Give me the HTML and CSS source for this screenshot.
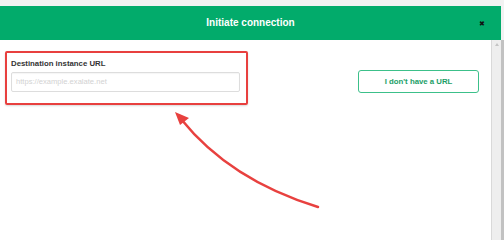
FILE: index.html
```html
<!DOCTYPE html>
<html>
<head>
<meta charset="utf-8">
<link rel="stylesheet" href="styles.css">
</head>
<body>
<div class="page">
  <div class="dialog">
    <div class="header">
      <span class="title">Initiate connection</span>
      <span class="close">&#x2716;</span>
    </div>
    <div class="body">
      <div class="content">
        <div class="highlight">
          <label class="label">Destination instance URL</label>
          <div class="input">https://example.exalate.net</div>
        </div>
        <div class="btn">I don't have a URL</div>
      </div>
      <div class="scrollbar"><span class="up"></span></div>
    </div>
  </div>
  <div class="edge"></div>
</div>
<svg class="arrow" width="504" height="237" viewBox="0 0 504 237">
  <path d="M318 207 Q230 180 181 119" fill="none" stroke="#e8413f" stroke-width="2.5" stroke-linecap="round"/>
  <polygon points="175,112 189,118 180,125" fill="#e8413f"/>
</svg>
</body>
</html>
```
FILE: styles.css
```css
html, body {
  margin: 0;
  padding: 0;
  height: 100%;
  overflow: hidden;
  background: #f2f2f2;
  font-family: "Liberation Sans", Arial, sans-serif;
}
.page {
  display: flex;
  padding-top: 6px;
  min-height: 100vh;
  height: 100%;
  box-sizing: border-box;
  position: relative;
}
.dialog {
  width: 501px;
  display: flex;
  flex-direction: column;
  background: #fff;
}
.header {
  height: 34px;
  background: #02ab6b;
  display: flex;
  align-items: center;
  justify-content: center;
  position: relative;
}
.title {
  color: #fff;
  font-weight: bold;
  font-size: 10px;
  margin-top: -1px;
}
.close {
  position: absolute;
  right: 16px;
  top: 14px;
  font-size: 7px;
  color: #111;
}
.body {
  flex: 1;
  display: flex;
}
.content {
  flex: 1;
  display: flex;
  align-items: flex-start;
  padding: 11px 0 0 5px;
}
.highlight {
  width: 243px;
  height: 54px;
  box-sizing: border-box;
  border: 2px solid #e8403f;
  border-radius: 2px;
  box-shadow: 0 1px 2px rgba(0,0,0,0.15);
  padding: 6px 0 0 4px;
}
.label {
  display: block;
  font-size: 7.8px;
  font-weight: bold;
  color: #333;
  line-height: 10px;
}
.input {
  margin-top: 3px;
  width: 229px;
  height: 20px;
  box-sizing: border-box;
  border: 1px solid #ddd;
  border-radius: 2px;
  box-shadow: inset 0 1px 1px rgba(0,0,0,0.04);
  font-size: 7.6px;
  color: #d2d2d2;
  padding: 0 0 0 4px;
  line-height: 18px;
}
.btn {
  margin: 19px 0 0 110px;
  width: 121px;
  height: 23px;
  box-sizing: border-box;
  border: 1.5px solid #3cc08a;
  border-radius: 3px;
  display: flex;
  align-items: center;
  justify-content: center;
  color: #1a9e66;
  font-weight: bold;
  font-size: 7.8px;
}
.scrollbar {
  width: 10px;
  background: #eeeeee;
  border-left: 1px solid #d9d9d9;
  display: flex;
  justify-content: center;
  padding-top: 3px;
  box-sizing: border-box;
}
.up {
  width: 0;
  height: 0;
  border-left: 2.5px solid transparent;
  border-right: 2.5px solid transparent;
  border-bottom: 3px solid #c4c4c4;
}
.edge {
  flex: 1;
  background: #c2c2c2;
  margin-top: 34px;
}
.arrow {
  position: absolute;
  left: 0;
  top: 0;
}
```
